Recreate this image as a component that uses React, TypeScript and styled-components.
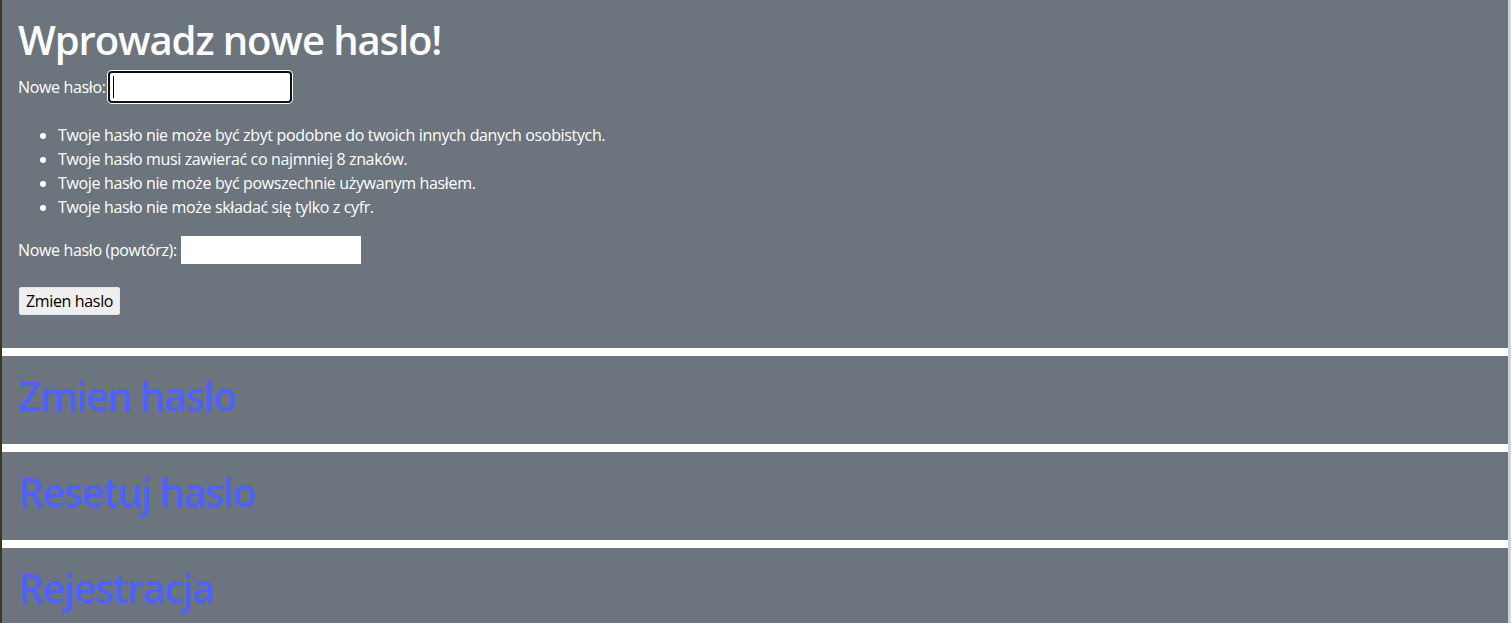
import React from "react";
import styled, { createGlobalStyle } from "styled-components";

const GlobalStyle = createGlobalStyle`
  html, body {
    margin: 0;
    padding: 0;
    background: #ffffff;
  }
  body {
    font-family: "Open Sans", "Noto Sans", sans-serif;
    font-size: 16px;
    line-height: 1.5;
    color: #ffffff;
    letter-spacing: -0.35px;
  }
`;

const Page = styled.div`
  display: flex;
  flex-direction: column;
  gap: 8px;
  border-left: 2px solid #3e342f;
  border-right: 3px solid #d4d4d4;
  min-height: 623px;
  box-sizing: border-box;
`;

const Section = styled.section<{ $bottom?: number }>`
  background: #6c757d;
  padding: 16px 16px ${(p) => p.$bottom ?? 16}px 16px;
  display: flex;
  flex-direction: column;
  align-items: flex-start;
`;

const Title = styled.h1<{ $link?: boolean }>`
  margin: 0 0 8px 0;
  font-size: 40px;
  line-height: 48px;
  font-weight: 600;
  letter-spacing: ${(p) => (p.$link ? "-1.6px" : "-1.1px")};
  color: ${(p) => (p.$link ? "#4e62fb" : "#ffffff")};
  cursor: ${(p) => (p.$link ? "pointer" : "default")};
`;

const FieldRow = styled.div`
  display: flex;
  align-items: center;
  gap: 4px;
  height: 30px;
`;

const Label = styled.label`
  font-size: 16px;
  line-height: 24px;
  white-space: nowrap;
`;

const InputWrap = styled.span`
  position: relative;
  display: inline-flex;
`;

const Input = styled.input<{ $focused?: boolean }>`
  width: 180px;
  height: 28px;
  box-sizing: border-box;
  border: none;
  background: #ffffff;
  padding: 0 3px;
  outline: none;
  border-radius: ${(p) => (p.$focused ? "2px" : "0")};
  box-shadow: ${(p) =>
    p.$focused ? "0 0 0 2px #101010, 0 0 0 3px #ffffff" : "none"};
`;

const Caret = styled.span`
  position: absolute;
  left: 3px;
  top: 3px;
  width: 1px;
  height: 22px;
  background: #000000;
`;

const HelpList = styled.ul`
  margin: 21px 0 16px 0;
  padding-left: 40px;
  list-style: disc;
`;

const HelpItem = styled.li`
  font-size: 16px;
  line-height: 24px;
`;

const SubmitButton = styled.button`
  margin-top: 22px;
  margin-left: 1px;
  height: 28px;
  padding: 0 6px;
  font-family: inherit;
  font-size: 16px;
  letter-spacing: -0.35px;
  color: #000000;
  background: #efefef;
  border: 1px solid #e6e6e6;
  border-radius: 2px;
`;

const rules = [
  "Twoje hasło nie może być zbyt podobne do twoich innych danych osobistych.",
  "Twoje hasło musi zawierać co najmniej 8 znaków.",
  "Twoje hasło nie może być powszechnie używanym hasłem.",
  "Twoje hasło nie może składać się tylko z cyfr.",
];

const links = ["Zmien haslo", "Resetuj haslo", "Rejestracja"];

export default function App() {
  return (
    <>
      <GlobalStyle />
      <Page>
        <Section $bottom={33}>
          <Title>Wprowadz nowe haslo!</Title>
          <FieldRow>
            <Label htmlFor="pw1">Nowe hasło:</Label>
            <InputWrap>
              <Input id="pw1" type="password" $focused />
              <Caret />
            </InputWrap>
          </FieldRow>
          <HelpList>
            {rules.map((r) => (
              <HelpItem key={r}>{r}</HelpItem>
            ))}
          </HelpList>
          <FieldRow>
            <Label htmlFor="pw2">Nowe hasło (powtórz):</Label>
            <Input id="pw2" type="password" />
          </FieldRow>
          <SubmitButton type="submit">Zmien haslo</SubmitButton>
        </Section>
        {links.map((l) => (
          <Section key={l}>
            <Title $link>{l}</Title>
          </Section>
        ))}
      </Page>
    </>
  );
}
